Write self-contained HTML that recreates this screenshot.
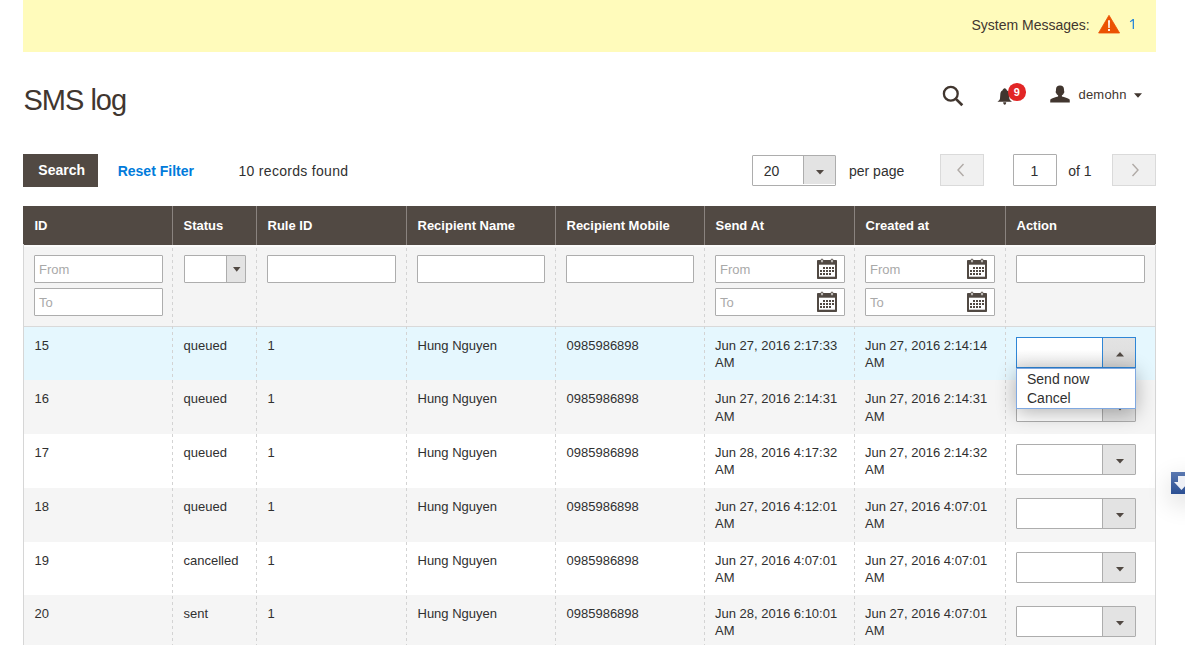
<!DOCTYPE html>
<html><head><meta charset="utf-8"><style>
html,body{margin:0;padding:0;}
body{width:1185px;height:645px;overflow:hidden;position:relative;background:#fff;font-family:"Liberation Sans", sans-serif;}
.t{position:absolute;white-space:nowrap;line-height:1;}
.a{position:absolute;box-sizing:border-box;}
.inp{position:absolute;box-sizing:border-box;background:#fff;border:1px solid #adadad;border-radius:1px;}
.ph{color:#a9a9a9;}
</style></head><body>
<div class="a" style="left:23px;top:0;width:1133px;height:52px;background:#fffbbb;"></div>
<div class="t" style="left:971.5px;top:17.65px;font-size:14px;color:#41362f;font-weight:normal;">System Messages:</div>
<svg class="a" style="left:1098px;top:15px;" width="23" height="19" viewBox="0 0 23 19"><path d="M11 0.3 L21.6 18 L0.6 18 Z" fill="#eb5202" stroke="#eb5202" stroke-width="0.8" stroke-linejoin="round"/><path d="M10.1 5.2 L11.9 5.2 L11.7 13 L10.3 13 Z" fill="#fff"/><rect x="10.1" y="14" width="1.8" height="2" fill="#fff"/></svg>
<svg class="a" style="left:1128px;top:17px;" width="8" height="14" viewBox="0 0 8 14"><path d="M4.7 1.9 L6 1.9 L6 12.1 L4.7 12.1 L4.7 3.7 L2.3 5.3 L1.8 4.4 Z" fill="#2a88d8"/></svg>
<div class="t" style="left:23.5px;top:86.45px;font-size:29px;color:#41362f;font-weight:normal;letter-spacing:-1.0px;">SMS log</div>
<svg class="a" style="left:942px;top:85px;" width="23" height="22" viewBox="0 0 23 22"><circle cx="8.8" cy="8.7" r="6.9" fill="none" stroke="#41362f" stroke-width="2.3"/><line x1="13.6" y1="13.6" x2="20.3" y2="20.3" stroke="#41362f" stroke-width="2.7" stroke-linecap="butt"/></svg>
<svg class="a" style="left:996px;top:87px;" width="17" height="19" viewBox="0 0 17 19"><path d="M8.7 1.2 C7.6 1.2 7.1 2.2 6.4 3.4 C5 3.9 4.4 5.2 4.3 7.5 L4 11.5 C3.8 13 2.8 13.9 1.4 14.8 L16 14.8 C14.6 13.9 13.6 13 13.4 11.5 L13.1 7.5 C13 5.2 12.4 3.9 11 3.4 C10.3 2.2 9.8 1.2 8.7 1.2 Z" fill="#41362f"/><path d="M7.2 15.3 L10.2 15.3 C10.2 16.9 9.6 17.8 8.7 17.8 C7.8 17.8 7.2 16.9 7.2 15.3 Z" fill="#41362f"/></svg>
<div class="a" style="left:1008px;top:83px;width:17.5px;height:17.5px;border-radius:50%;background:#e22626;"></div>
<div class="t" style="left:1013.8px;top:87.19px;font-size:11px;color:#fff;font-weight:bold;">9</div>
<svg class="a" style="left:1050px;top:85px;" width="20" height="19" viewBox="0 0 20 19"><path d="M9.9 0.6 C7.4 0.6 6 2 6 4.5 L5.9 6.3 C5.5 6.6 5.5 7.6 6.1 7.9 C6.5 9 7.2 9.8 8.1 10.2 L8.1 11.4 C5.5 12 2.2 12.8 0.3 14.4 L0.2 17.6 L19.8 17.6 L19.7 14.4 C17.8 12.8 14.5 12 11.9 11.4 L11.9 10.2 C12.8 9.8 13.5 9 13.9 7.9 C14.5 7.6 14.5 6.6 14.1 6.3 L14 4.5 C14 2 12.6 0.6 10.1 0.6 Z" fill="#41362f"/></svg>
<div class="t" style="left:1078.5px;top:87.60px;font-size:13px;color:#41362f;font-weight:normal;letter-spacing:0.2px;">demohn</div>
<svg class="a" style="left:1134px;top:93px;" width="8" height="5" viewBox="0 0 8 5"><path d="M0 0.2 L8 0.2 L4 4.8 Z" fill="#41362f"/></svg>
<div class="a" style="left:23px;top:154px;width:75px;height:32.5px;background:#514943;"></div>
<div class="t" style="left:38.3px;top:163.35px;font-size:14px;color:#fff;font-weight:bold;">Search</div>
<div class="t" style="left:117.7px;top:163.55px;font-size:14px;color:#007bdb;font-weight:bold;">Reset Filter</div>
<div class="t" style="left:238.5px;top:163.55px;font-size:14px;color:#303030;font-weight:normal;letter-spacing:0.3px;">10 records found</div>
<div class="inp" style="left:752px;top:155px;width:84px;height:30.5px;"></div>
<div class="a" style="left:803px;top:156px;width:32px;height:28px;background:#e3e3e3;border-left:1px solid #adadad;"></div>
<div class="t" style="left:763.8px;top:163.75px;font-size:14px;color:#303030;font-weight:normal;">20</div>
<svg class="a" style="left:815.5px;top:169.5px;" width="8" height="5" viewBox="0 0 8 5"><path d="M0 0 L8 0 L4 4.6 Z" fill="#514943"/></svg>
<div class="t" style="left:849px;top:163.75px;font-size:14px;color:#303030;font-weight:normal;">per page</div>
<div class="a" style="left:940px;top:154px;width:44px;height:32px;background:#f0f0f0;border:1px solid #dadada;"></div>
<svg class="a" style="left:956px;top:163px;" width="10" height="14" viewBox="0 0 10 14"><path d="M7.5 1 L2 7 L7.5 13" fill="none" stroke="#b0aaa6" stroke-width="1.4"/></svg>
<div class="inp" style="left:1013px;top:154px;width:44px;height:32px;"></div>
<div class="t" style="left:1030.5px;top:163.75px;font-size:14px;color:#303030;font-weight:normal;">1</div>
<div class="t" style="left:1068.3px;top:163.75px;font-size:14px;color:#303030;font-weight:normal;">of 1</div>
<div class="a" style="left:1112px;top:154px;width:44px;height:32px;background:#f0f0f0;border:1px solid #dadada;"></div>
<svg class="a" style="left:1130px;top:163px;" width="10" height="14" viewBox="0 0 10 14"><path d="M2.5 1 L8 7 L2.5 13" fill="none" stroke="#b0aaa6" stroke-width="1.4"/></svg>
<div class="a" style="left:23px;top:206px;width:1133px;height:39px;background:#514943;"></div>
<div class="a" style="left:172px;top:206px;width:1px;height:39px;background:#8a837f;"></div>
<div class="a" style="left:256px;top:206px;width:1px;height:39px;background:#8a837f;"></div>
<div class="a" style="left:406px;top:206px;width:1px;height:39px;background:#8a837f;"></div>
<div class="a" style="left:555px;top:206px;width:1px;height:39px;background:#8a837f;"></div>
<div class="a" style="left:704px;top:206px;width:1px;height:39px;background:#8a837f;"></div>
<div class="a" style="left:854px;top:206px;width:1px;height:39px;background:#8a837f;"></div>
<div class="a" style="left:1005px;top:206px;width:1px;height:39px;background:#8a837f;"></div>
<div class="t" style="left:34.5px;top:219.00px;font-size:13px;color:#fff;font-weight:bold;">ID</div>
<div class="t" style="left:183.5px;top:219.00px;font-size:13px;color:#fff;font-weight:bold;">Status</div>
<div class="t" style="left:267.5px;top:219.00px;font-size:13px;color:#fff;font-weight:bold;">Rule ID</div>
<div class="t" style="left:417.5px;top:219.00px;font-size:13px;color:#fff;font-weight:bold;">Recipient Name</div>
<div class="t" style="left:566.5px;top:219.00px;font-size:13px;color:#fff;font-weight:bold;">Recipient Mobile</div>
<div class="t" style="left:715.5px;top:219.00px;font-size:13px;color:#fff;font-weight:bold;">Send At</div>
<div class="t" style="left:865.5px;top:219.00px;font-size:13px;color:#fff;font-weight:bold;">Created at</div>
<div class="t" style="left:1016.5px;top:219.00px;font-size:13px;color:#fff;font-weight:bold;">Action</div>
<div class="a" style="left:23px;top:244px;width:1px;height:410px;background:#d6d6d6;"></div>
<div class="a" style="left:1155px;top:244px;width:1px;height:410px;background:#d6d6d6;"></div>
<div class="a" style="left:24px;top:245px;width:1131px;height:81px;background:#f4f4f4;border-top:2px solid #fbfbfb;"></div>
<div class="a" style="left:24px;top:326px;width:1131px;height:1px;background:#d9d9d9;"></div>
<div class="a" style="left:24px;top:327px;width:1131px;height:53px;background:#e5f7fe;"></div>
<div class="a" style="left:24px;top:380px;width:1131px;height:54px;background:#f5f5f5;"></div>
<div class="a" style="left:24px;top:434px;width:1131px;height:54px;background:#ffffff;"></div>
<div class="a" style="left:24px;top:488px;width:1131px;height:54px;background:#f5f5f5;"></div>
<div class="a" style="left:24px;top:542px;width:1131px;height:53px;background:#ffffff;"></div>
<div class="a" style="left:24px;top:595px;width:1131px;height:65px;background:#f5f5f5;"></div>
<div class="a" style="left:172px;top:248px;width:1px;height:410px;background:repeating-linear-gradient(to bottom,#d3d3d3 0 3px,transparent 3px 6px);"></div>
<div class="a" style="left:256px;top:248px;width:1px;height:410px;background:repeating-linear-gradient(to bottom,#d3d3d3 0 3px,transparent 3px 6px);"></div>
<div class="a" style="left:406px;top:248px;width:1px;height:410px;background:repeating-linear-gradient(to bottom,#d3d3d3 0 3px,transparent 3px 6px);"></div>
<div class="a" style="left:555px;top:248px;width:1px;height:410px;background:repeating-linear-gradient(to bottom,#d3d3d3 0 3px,transparent 3px 6px);"></div>
<div class="a" style="left:704px;top:248px;width:1px;height:410px;background:repeating-linear-gradient(to bottom,#d3d3d3 0 3px,transparent 3px 6px);"></div>
<div class="a" style="left:854px;top:248px;width:1px;height:410px;background:repeating-linear-gradient(to bottom,#d3d3d3 0 3px,transparent 3px 6px);"></div>
<div class="a" style="left:1005px;top:248px;width:1px;height:410px;background:repeating-linear-gradient(to bottom,#d3d3d3 0 3px,transparent 3px 6px);"></div>
<div class="inp" style="left:34px;top:255px;width:129px;height:28px;"></div>
<div class="t" style="left:39px;top:263.20px;font-size:13px;color:#a9a9a9;font-weight:normal;">From</div>
<div class="inp" style="left:34px;top:288px;width:129px;height:28px;"></div>
<div class="t" style="left:39px;top:296.20px;font-size:13px;color:#a9a9a9;font-weight:normal;">To</div>
<div class="inp" style="left:184px;top:255px;width:62px;height:28px;"></div>
<div class="a" style="left:226px;top:256px;width:19px;height:26px;background:#e3e3e3;border-left:1px solid #adadad;"></div>
<svg class="a" style="left:232.5px;top:267px;" width="8" height="5" viewBox="0 0 8 5"><path d="M0 0 L7.5 0 L3.75 4.7 Z" fill="#514943"/></svg>
<div class="inp" style="left:267px;top:255px;width:129px;height:28px;"></div>
<div class="inp" style="left:417px;top:255px;width:128px;height:28px;"></div>
<div class="inp" style="left:566px;top:255px;width:128px;height:28px;"></div>
<div class="inp" style="left:715px;top:255px;width:130px;height:28px;"></div>
<div class="t" style="left:720px;top:263.20px;font-size:13px;color:#a9a9a9;font-weight:normal;">From</div>
<svg class="a" style="left:816px;top:258px;" width="21" height="21" viewBox="0 0 21 21"><rect x="1" y="2" width="20" height="19" rx="0.8" fill="#514943"/><rect x="3" y="6.7" width="16" height="12" fill="#fff"/><ellipse cx="6" cy="3" rx="1.2" ry="2" fill="#fff" stroke="#514943" stroke-width="1"/><ellipse cx="16" cy="3" rx="1.2" ry="2" fill="#fff" stroke="#514943" stroke-width="1"/><rect x="7" y="9" width="2" height="2" fill="#514943"/><rect x="10" y="9" width="2" height="2" fill="#514943"/><rect x="13" y="9" width="2" height="2" fill="#514943"/><rect x="16" y="9" width="2" height="2" fill="#514943"/><rect x="4" y="12" width="2" height="2" fill="#514943"/><rect x="7" y="12" width="2" height="2" fill="#514943"/><rect x="10" y="12" width="2" height="2" fill="#514943"/><rect x="13" y="12" width="2" height="2" fill="#514943"/><rect x="16" y="12" width="2" height="2" fill="#514943"/><rect x="4" y="15" width="2" height="2" fill="#514943"/><rect x="7" y="15" width="2" height="2" fill="#514943"/><rect x="10" y="15" width="2" height="2" fill="#514943"/><rect x="13" y="15" width="2" height="2" fill="#514943"/></svg>
<div class="inp" style="left:715px;top:288px;width:130px;height:28px;"></div>
<div class="t" style="left:720px;top:296.20px;font-size:13px;color:#a9a9a9;font-weight:normal;">To</div>
<svg class="a" style="left:816px;top:291px;" width="21" height="21" viewBox="0 0 21 21"><rect x="1" y="2" width="20" height="19" rx="0.8" fill="#514943"/><rect x="3" y="6.7" width="16" height="12" fill="#fff"/><ellipse cx="6" cy="3" rx="1.2" ry="2" fill="#fff" stroke="#514943" stroke-width="1"/><ellipse cx="16" cy="3" rx="1.2" ry="2" fill="#fff" stroke="#514943" stroke-width="1"/><rect x="7" y="9" width="2" height="2" fill="#514943"/><rect x="10" y="9" width="2" height="2" fill="#514943"/><rect x="13" y="9" width="2" height="2" fill="#514943"/><rect x="16" y="9" width="2" height="2" fill="#514943"/><rect x="4" y="12" width="2" height="2" fill="#514943"/><rect x="7" y="12" width="2" height="2" fill="#514943"/><rect x="10" y="12" width="2" height="2" fill="#514943"/><rect x="13" y="12" width="2" height="2" fill="#514943"/><rect x="16" y="12" width="2" height="2" fill="#514943"/><rect x="4" y="15" width="2" height="2" fill="#514943"/><rect x="7" y="15" width="2" height="2" fill="#514943"/><rect x="10" y="15" width="2" height="2" fill="#514943"/><rect x="13" y="15" width="2" height="2" fill="#514943"/></svg>
<div class="inp" style="left:865px;top:255px;width:130px;height:28px;"></div>
<div class="t" style="left:870px;top:263.20px;font-size:13px;color:#a9a9a9;font-weight:normal;">From</div>
<svg class="a" style="left:966px;top:258px;" width="21" height="21" viewBox="0 0 21 21"><rect x="1" y="2" width="20" height="19" rx="0.8" fill="#514943"/><rect x="3" y="6.7" width="16" height="12" fill="#fff"/><ellipse cx="6" cy="3" rx="1.2" ry="2" fill="#fff" stroke="#514943" stroke-width="1"/><ellipse cx="16" cy="3" rx="1.2" ry="2" fill="#fff" stroke="#514943" stroke-width="1"/><rect x="7" y="9" width="2" height="2" fill="#514943"/><rect x="10" y="9" width="2" height="2" fill="#514943"/><rect x="13" y="9" width="2" height="2" fill="#514943"/><rect x="16" y="9" width="2" height="2" fill="#514943"/><rect x="4" y="12" width="2" height="2" fill="#514943"/><rect x="7" y="12" width="2" height="2" fill="#514943"/><rect x="10" y="12" width="2" height="2" fill="#514943"/><rect x="13" y="12" width="2" height="2" fill="#514943"/><rect x="16" y="12" width="2" height="2" fill="#514943"/><rect x="4" y="15" width="2" height="2" fill="#514943"/><rect x="7" y="15" width="2" height="2" fill="#514943"/><rect x="10" y="15" width="2" height="2" fill="#514943"/><rect x="13" y="15" width="2" height="2" fill="#514943"/></svg>
<div class="inp" style="left:865px;top:288px;width:130px;height:28px;"></div>
<div class="t" style="left:870px;top:296.20px;font-size:13px;color:#a9a9a9;font-weight:normal;">To</div>
<svg class="a" style="left:966px;top:291px;" width="21" height="21" viewBox="0 0 21 21"><rect x="1" y="2" width="20" height="19" rx="0.8" fill="#514943"/><rect x="3" y="6.7" width="16" height="12" fill="#fff"/><ellipse cx="6" cy="3" rx="1.2" ry="2" fill="#fff" stroke="#514943" stroke-width="1"/><ellipse cx="16" cy="3" rx="1.2" ry="2" fill="#fff" stroke="#514943" stroke-width="1"/><rect x="7" y="9" width="2" height="2" fill="#514943"/><rect x="10" y="9" width="2" height="2" fill="#514943"/><rect x="13" y="9" width="2" height="2" fill="#514943"/><rect x="16" y="9" width="2" height="2" fill="#514943"/><rect x="4" y="12" width="2" height="2" fill="#514943"/><rect x="7" y="12" width="2" height="2" fill="#514943"/><rect x="10" y="12" width="2" height="2" fill="#514943"/><rect x="13" y="12" width="2" height="2" fill="#514943"/><rect x="16" y="12" width="2" height="2" fill="#514943"/><rect x="4" y="15" width="2" height="2" fill="#514943"/><rect x="7" y="15" width="2" height="2" fill="#514943"/><rect x="10" y="15" width="2" height="2" fill="#514943"/><rect x="13" y="15" width="2" height="2" fill="#514943"/></svg>
<div class="inp" style="left:1016px;top:255px;width:129px;height:28px;"></div>
<div class="t" style="left:34.5px;top:338.70px;font-size:13px;color:#303030;font-weight:normal;">15</div>
<div class="t" style="left:183.5px;top:338.70px;font-size:13px;color:#303030;font-weight:normal;">queued</div>
<div class="t" style="left:267.5px;top:338.70px;font-size:13px;color:#303030;font-weight:normal;">1</div>
<div class="t" style="left:417.5px;top:338.70px;font-size:13px;color:#303030;font-weight:normal;">Hung Nguyen</div>
<div class="t" style="left:566.5px;top:338.70px;font-size:13px;color:#303030;font-weight:normal;">0985986898</div>
<div class="t" style="left:715px;top:338.70px;font-size:13px;color:#303030;font-weight:normal;">Jun 27, 2016 2:17:33</div>
<div class="t" style="left:715px;top:355.90px;font-size:13px;color:#303030;font-weight:normal;">AM</div>
<div class="t" style="left:865px;top:338.70px;font-size:13px;color:#303030;font-weight:normal;">Jun 27, 2016 2:14:14</div>
<div class="t" style="left:865px;top:355.90px;font-size:13px;color:#303030;font-weight:normal;">AM</div>
<div class="a" style="left:1016px;top:337px;width:120px;height:31px;background:linear-gradient(#fff,#fff 40%,#ebebeb);border:1px solid #2f86d6;"></div>
<div class="a" style="left:1102px;top:338px;width:33px;height:29px;background:linear-gradient(#e3e3e3,#e0e0e0 40%,#d2d2d2);border-left:1px solid #2f86d6;"></div>
<svg class="a" style="left:1115.5px;top:351.5px;" width="8" height="5" viewBox="0 0 8 5"><path d="M0 4.6 L8 4.6 L4 0 Z" fill="#514943"/></svg>
<div class="t" style="left:34.5px;top:392.40px;font-size:13px;color:#303030;font-weight:normal;">16</div>
<div class="t" style="left:183.5px;top:392.40px;font-size:13px;color:#303030;font-weight:normal;">queued</div>
<div class="t" style="left:267.5px;top:392.40px;font-size:13px;color:#303030;font-weight:normal;">1</div>
<div class="t" style="left:417.5px;top:392.40px;font-size:13px;color:#303030;font-weight:normal;">Hung Nguyen</div>
<div class="t" style="left:566.5px;top:392.40px;font-size:13px;color:#303030;font-weight:normal;">0985986898</div>
<div class="t" style="left:715px;top:392.40px;font-size:13px;color:#303030;font-weight:normal;">Jun 27, 2016 2:14:31</div>
<div class="t" style="left:715px;top:409.60px;font-size:13px;color:#303030;font-weight:normal;">AM</div>
<div class="t" style="left:865px;top:392.40px;font-size:13px;color:#303030;font-weight:normal;">Jun 27, 2016 2:14:31</div>
<div class="t" style="left:865px;top:409.60px;font-size:13px;color:#303030;font-weight:normal;">AM</div>
<div class="inp" style="left:1016px;top:391px;width:120px;height:31px;"></div>
<div class="a" style="left:1102px;top:392px;width:33px;height:29px;background:#e3e3e3;border-left:1px solid #adadad;"></div>
<svg class="a" style="left:1115.5px;top:405.8px;" width="8" height="5" viewBox="0 0 8 5"><path d="M0 0 L8 0 L4 4.6 Z" fill="#514943"/></svg>
<div class="t" style="left:34.5px;top:446.10px;font-size:13px;color:#303030;font-weight:normal;">17</div>
<div class="t" style="left:183.5px;top:446.10px;font-size:13px;color:#303030;font-weight:normal;">queued</div>
<div class="t" style="left:267.5px;top:446.10px;font-size:13px;color:#303030;font-weight:normal;">1</div>
<div class="t" style="left:417.5px;top:446.10px;font-size:13px;color:#303030;font-weight:normal;">Hung Nguyen</div>
<div class="t" style="left:566.5px;top:446.10px;font-size:13px;color:#303030;font-weight:normal;">0985986898</div>
<div class="t" style="left:715px;top:446.10px;font-size:13px;color:#303030;font-weight:normal;">Jun 28, 2016 4:17:32</div>
<div class="t" style="left:715px;top:463.30px;font-size:13px;color:#303030;font-weight:normal;">AM</div>
<div class="t" style="left:865px;top:446.10px;font-size:13px;color:#303030;font-weight:normal;">Jun 27, 2016 2:14:32</div>
<div class="t" style="left:865px;top:463.30px;font-size:13px;color:#303030;font-weight:normal;">AM</div>
<div class="inp" style="left:1016px;top:444px;width:120px;height:31px;"></div>
<div class="a" style="left:1102px;top:445px;width:33px;height:29px;background:#e3e3e3;border-left:1px solid #adadad;"></div>
<svg class="a" style="left:1115.5px;top:458.8px;" width="8" height="5" viewBox="0 0 8 5"><path d="M0 0 L8 0 L4 4.6 Z" fill="#514943"/></svg>
<div class="t" style="left:34.5px;top:499.80px;font-size:13px;color:#303030;font-weight:normal;">18</div>
<div class="t" style="left:183.5px;top:499.80px;font-size:13px;color:#303030;font-weight:normal;">queued</div>
<div class="t" style="left:267.5px;top:499.80px;font-size:13px;color:#303030;font-weight:normal;">1</div>
<div class="t" style="left:417.5px;top:499.80px;font-size:13px;color:#303030;font-weight:normal;">Hung Nguyen</div>
<div class="t" style="left:566.5px;top:499.80px;font-size:13px;color:#303030;font-weight:normal;">0985986898</div>
<div class="t" style="left:715px;top:499.80px;font-size:13px;color:#303030;font-weight:normal;">Jun 27, 2016 4:12:01</div>
<div class="t" style="left:715px;top:517.00px;font-size:13px;color:#303030;font-weight:normal;">AM</div>
<div class="t" style="left:865px;top:499.80px;font-size:13px;color:#303030;font-weight:normal;">Jun 27, 2016 4:07:01</div>
<div class="t" style="left:865px;top:517.00px;font-size:13px;color:#303030;font-weight:normal;">AM</div>
<div class="inp" style="left:1016px;top:498px;width:120px;height:31px;"></div>
<div class="a" style="left:1102px;top:499px;width:33px;height:29px;background:#e3e3e3;border-left:1px solid #adadad;"></div>
<svg class="a" style="left:1115.5px;top:512.8px;" width="8" height="5" viewBox="0 0 8 5"><path d="M0 0 L8 0 L4 4.6 Z" fill="#514943"/></svg>
<div class="t" style="left:34.5px;top:553.50px;font-size:13px;color:#303030;font-weight:normal;">19</div>
<div class="t" style="left:183.5px;top:553.50px;font-size:13px;color:#303030;font-weight:normal;">cancelled</div>
<div class="t" style="left:267.5px;top:553.50px;font-size:13px;color:#303030;font-weight:normal;">1</div>
<div class="t" style="left:417.5px;top:553.50px;font-size:13px;color:#303030;font-weight:normal;">Hung Nguyen</div>
<div class="t" style="left:566.5px;top:553.50px;font-size:13px;color:#303030;font-weight:normal;">0985986898</div>
<div class="t" style="left:715px;top:553.50px;font-size:13px;color:#303030;font-weight:normal;">Jun 27, 2016 4:07:01</div>
<div class="t" style="left:715px;top:570.70px;font-size:13px;color:#303030;font-weight:normal;">AM</div>
<div class="t" style="left:865px;top:553.50px;font-size:13px;color:#303030;font-weight:normal;">Jun 27, 2016 4:07:01</div>
<div class="t" style="left:865px;top:570.70px;font-size:13px;color:#303030;font-weight:normal;">AM</div>
<div class="inp" style="left:1016px;top:552px;width:120px;height:31px;"></div>
<div class="a" style="left:1102px;top:553px;width:33px;height:29px;background:#e3e3e3;border-left:1px solid #adadad;"></div>
<svg class="a" style="left:1115.5px;top:566.8px;" width="8" height="5" viewBox="0 0 8 5"><path d="M0 0 L8 0 L4 4.6 Z" fill="#514943"/></svg>
<div class="t" style="left:34.5px;top:607.20px;font-size:13px;color:#303030;font-weight:normal;">20</div>
<div class="t" style="left:183.5px;top:607.20px;font-size:13px;color:#303030;font-weight:normal;">sent</div>
<div class="t" style="left:267.5px;top:607.20px;font-size:13px;color:#303030;font-weight:normal;">1</div>
<div class="t" style="left:417.5px;top:607.20px;font-size:13px;color:#303030;font-weight:normal;">Hung Nguyen</div>
<div class="t" style="left:566.5px;top:607.20px;font-size:13px;color:#303030;font-weight:normal;">0985986898</div>
<div class="t" style="left:715px;top:607.20px;font-size:13px;color:#303030;font-weight:normal;">Jun 28, 2016 6:10:01</div>
<div class="t" style="left:715px;top:624.40px;font-size:13px;color:#303030;font-weight:normal;">AM</div>
<div class="t" style="left:865px;top:607.20px;font-size:13px;color:#303030;font-weight:normal;">Jun 27, 2016 4:07:01</div>
<div class="t" style="left:865px;top:624.40px;font-size:13px;color:#303030;font-weight:normal;">AM</div>
<div class="inp" style="left:1016px;top:606px;width:120px;height:31px;"></div>
<div class="a" style="left:1102px;top:607px;width:33px;height:29px;background:#e3e3e3;border-left:1px solid #adadad;"></div>
<svg class="a" style="left:1115.5px;top:620.8px;" width="8" height="5" viewBox="0 0 8 5"><path d="M0 0 L8 0 L4 4.6 Z" fill="#514943"/></svg>
<div class="a" style="left:1016px;top:368px;width:120px;height:41px;background:#fff;border:1px solid #7fa8e0;box-shadow:0 4px 20px rgba(0,0,0,0.3);"></div>
<div class="t" style="left:1027px;top:371.65px;font-size:14px;color:#303030;font-weight:normal;">Send now</div>
<div class="t" style="left:1027px;top:391.15px;font-size:14px;color:#303030;font-weight:normal;">Cancel</div>
<div class="a" style="left:1171px;top:472px;width:30px;height:22px;box-shadow:0 8px 26px rgba(0,0,0,0.16);"></div><svg class="a" style="left:1171px;top:472px;" width="14" height="22" viewBox="0 0 14 22"><defs><linearGradient id="bg" x1="0" y1="0" x2="0" y2="1"><stop offset="0" stop-color="#5a78b0"/><stop offset="1" stop-color="#2b4f93"/></linearGradient></defs><rect width="14" height="22" fill="url(#bg)"/><path d="M7 4 L14 4 L14 10 L18 10 L10.5 18 L3 10 L7 10 Z" fill="#eef0f6"/></svg>
</body></html>
